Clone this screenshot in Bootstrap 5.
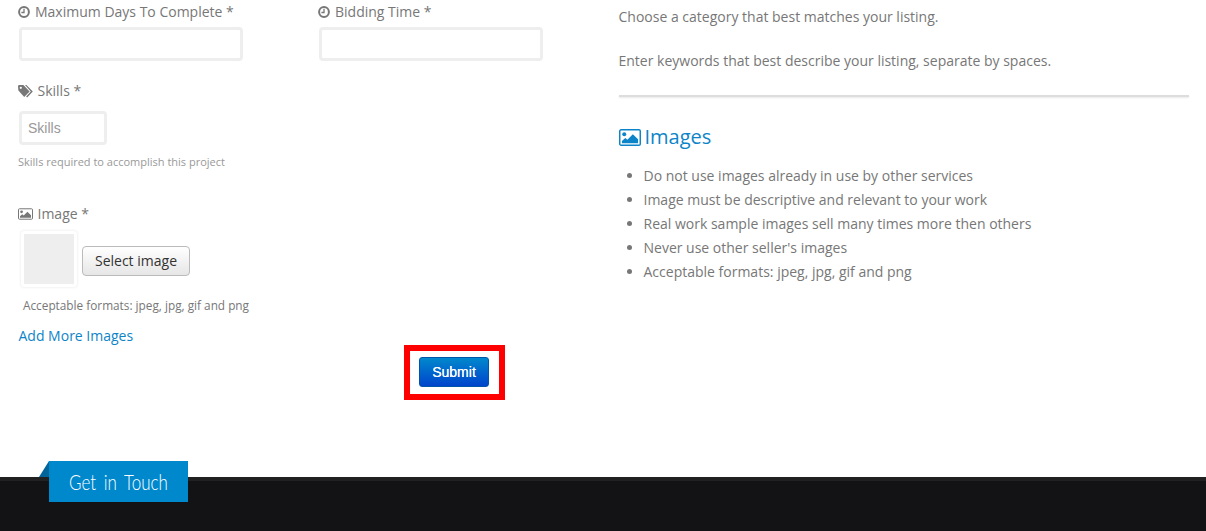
<!DOCTYPE html>
<html lang="en">
<head>
<meta charset="utf-8">
<title>Listing form</title>
<link rel="stylesheet" href="https://cdn.jsdelivr.net/npm/bootstrap@5.3.0/dist/css/bootstrap.min.css">
<style>
html,body{height:531px;overflow:hidden}
body{font-family:"Open Sans","Liberation Sans",sans-serif;font-size:14px;line-height:20px;color:#777;background:#fff}
.page-area{height:477px;display:flex;padding-left:18px}
.left-pane{width:600.5px;flex:none}
.right-pane{width:570.5px;flex:none}
.field-lbl{display:flex;align-items:center;gap:4.5px;height:20px;margin:0;color:#777;white-space:nowrap}
.field-lbl svg{flex:none}
.top-fields{display:flex;gap:75px;padding-top:2px}
.top-fld{width:225px}
.top-fld .field-lbl{gap:5px}
.box-input{display:block;width:224px;height:34px;margin:5px 0 0 1px;border:3px solid #eee;border-radius:4px;background:#fff;padding:0 6px;font-family:"Liberation Sans",sans-serif;font-size:14px;color:#777}
.box-input::placeholder{color:#999}
.skills-input{width:88px}
.skills-lbl{margin-top:20px}
.skills-lbl + .box-input{margin-top:10px}
.help-txt{font-size:11px;line-height:14px;color:#999;margin:10px 0 0}
.img-lbl{margin-top:35px}
.img-row{display:flex;align-items:center;gap:4px;margin:6px 0 0 2px}
.thumb-frame{width:58px;height:58px;padding:3px;border:1px solid #f6f6f6;border-radius:4px;box-shadow:0 0 2px #f2f2f2}
.thumb-fill{width:100%;height:100%;background:#eee}
.select-btn{width:108px;height:30px;margin-top:4px;padding:0;font-size:14px;line-height:28px;color:#333;border:1px solid #bbb;border-radius:4px;background:linear-gradient(#fff,#e6e6e6)}
.formats-txt{font-size:11.8px;line-height:16px;color:#777;margin:9px 0 0 5px}
.more-link{display:block;margin:13px 0 0 .5px;color:#0d84c8;text-decoration:none}
.submit-wrap{width:101px;height:55px;margin:-1px 0 0 386px;padding:0 1px 2px 0;border:6px solid #f00;display:flex;align-items:center;justify-content:center}
.submit-btn{width:70px;height:30px;padding:0;font-family:"Liberation Sans",sans-serif;font-size:14px;font-weight:400;line-height:28px;color:#fff;border:1px solid #0055a8;border-radius:3px;background:linear-gradient(#0088cc,#0044cc);text-shadow:0 0 .5px #fff}
.hint-line{margin:0;height:20px;white-space:nowrap}
.hint-first{margin-top:7px}
.hint-second{margin-top:24px}
.sep-line{height:2px;background:#ddd;margin:24px 0 0;box-shadow:0 1px 2px #e8e8e8}
.img-title{display:flex;align-items:center;gap:4px;font-size:20px;line-height:28px;font-weight:400;color:#0d84c8;margin:26px 0 0}
.tips-list{margin:13px 0 0;padding-left:25px;line-height:24px}
.site-foot{height:54px;background:#131315;border-top:4px solid #212121;position:relative}
.touch-tab{position:absolute;left:49px;top:-20px;width:139px;height:41px;background:#0088cc;color:#fff;font-family:Lato,"Open Sans",sans-serif;font-weight:300;font-size:17px;word-spacing:3px;line-height:41px;text-align:center}
.touch-txt{display:inline-block;transform:scaleY(1.3)}
.touch-tab::before{content:"";position:absolute;left:-10px;top:0;border-style:solid;border-width:0 0 16px 10px;border-color:transparent transparent #006699 transparent}
</style>
</head>
<body>
<svg width="0" height="0" class="position-absolute">
  <defs>
    <symbol id="ic-clock" viewBox="0 0 12 12"><circle cx="6" cy="6" r="4.9" fill="none" stroke="currentColor" stroke-width="2"/><path d="M6 2.8V6.5H3.4" fill="none" stroke="currentColor" stroke-width="1.3"/></symbol>
    <symbol id="ic-tags" viewBox="0 0 15 13"><path d="M0 1.4C0 .6.6 0 1.4 0H5.4L11.6 6.4 6.2 12 .4 5.6Z" fill="currentColor"/><path d="M7 0H8.4L14.8 6.6 9.2 12.6 8.1 11.5 12.8 6.6Z" fill="currentColor"/><circle cx="2.8" cy="2.8" r="1.1" fill="#fff"/></symbol>
    <symbol id="ic-pic" viewBox="0 0 21 16"><rect x=".7" y=".7" width="19.6" height="14.6" rx="1.2" fill="none" stroke="currentColor" stroke-width="1.4"/><circle cx="5" cy="5" r="1.9" fill="currentColor"/><path d="M2.8 13.4V11.3L6 8.4 8 10.2 13.2 4.8 18.2 9.7V13.4Z" fill="currentColor"/></symbol>
  </defs>
</svg>
<div class="page-area">
  <div class="left-pane">
    <div class="top-fields">
      <div class="top-fld">
        <label class="field-lbl"><svg width="12" height="12"><use href="#ic-clock"/></svg>Maximum Days To Complete *</label>
        <input class="box-input" type="text">
      </div>
      <div class="top-fld">
        <label class="field-lbl"><svg width="12" height="12"><use href="#ic-clock"/></svg>Bidding Time *</label>
        <input class="box-input" type="text">
      </div>
    </div>
    <label class="field-lbl skills-lbl"><svg width="15" height="13"><use href="#ic-tags"/></svg>Skills *</label>
    <input class="box-input skills-input" type="text" placeholder="Skills">
    <p class="help-txt">Skills required to accomplish this project</p>
    <label class="field-lbl img-lbl"><svg width="15" height="12"><use href="#ic-pic"/></svg>Image *</label>
    <div class="img-row">
      <div class="thumb-frame"><div class="thumb-fill"></div></div>
      <button class="btn select-btn" type="button">Select image</button>
    </div>
    <p class="formats-txt">Acceptable formats: jpeg, jpg, gif and png</p>
    <a class="more-link" href="#">Add More Images</a>
    <div class="submit-wrap"><button class="btn submit-btn" type="button">Submit</button></div>
  </div>
  <div class="right-pane">
    <p class="hint-line hint-first">Choose a category that best matches your listing.</p>
    <p class="hint-line hint-second">Enter keywords that best describe your listing, separate by spaces.</p>
    <div class="sep-line"></div>
    <h4 class="img-title"><svg width="22" height="17"><use href="#ic-pic"/></svg>Images</h4>
    <ul class="tips-list">
      <li>Do not use images already in use by other services</li>
      <li>Image must be descriptive and relevant to your work</li>
      <li>Real work sample images sell many times more then others</li>
      <li>Never use other seller's images</li>
      <li>Acceptable formats: jpeg, jpg, gif and png</li>
    </ul>
  </div>
</div>
<footer class="site-foot"><div class="touch-tab"><span class="touch-txt">Get in Touch</span></div></footer>
<script src="https://cdn.jsdelivr.net/npm/bootstrap@5.3.0/dist/js/bootstrap.bundle.min.js"></script>
</body>
</html>
